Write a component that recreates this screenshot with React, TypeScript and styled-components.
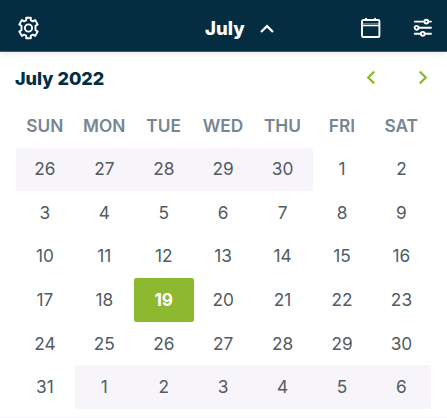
import React from 'react';
import styled, { createGlobalStyle } from 'styled-components';

const GlobalStyle = createGlobalStyle`
  *, *::before, *::after { box-sizing: border-box; }
  body { margin: 0; background: #fff; overflow: hidden; }
  button { padding: 0; border: 0; background: none; font: inherit; color: inherit; display: flex; }
  svg { display: block; fill: none; stroke: currentColor; }
`;

const Page = styled.main`
  width: 447px;
  height: 418px;
  display: flex;
  flex-direction: column;
  border-bottom: 1px solid #f7f6f8;
  font-family: Inter, "Liberation Sans", sans-serif;
`;

const TopBar = styled.header`
  height: 52px;
  flex: none;
  display: grid;
  grid-template-columns: 189px auto 1fr;
  align-items: center;
  padding: 4px 14px 0 16px;
  background: #042d42;
  color: #fff;
  border-bottom: 1px solid #405b6c;
  box-shadow: 0 1px 6px rgba(70, 40, 90, 0.14);
`;

const MonthPicker = styled.button`
  && { align-items: center; gap: 15px; }
  font-size: 18.5px;
  line-height: 24px;

  && { font-weight: 800; }

  svg { margin-top: 2px; }
`;

const Actions = styled.div`
  display: flex;
  justify-content: flex-end;
  gap: 31px;
`;

const MonthHeader = styled.div`
  height: 52px;
  flex: none;
  display: flex;
  justify-content: space-between;
  align-items: center;
  padding: 0 18px 0 15px;
`;

const MonthTitle = styled.h1`
  margin: 1px 0 0;
  font-size: 18px;
  line-height: 24px;
  font-weight: 800;
  color: #042d42;
`;

const MonthNav = styled.nav`
  display: flex;
  gap: 40px;
  color: #8cb92f;
`;

const Weekdays = styled.div`
  height: 43.5px;
  flex: none;
  margin: 0 16px 0 15px;
  display: grid;
  grid-template-columns: repeat(7, 1fr);
  align-items: center;
  text-align: center;
  font-size: 17.3px;
  font-weight: 570;
  color: #768692;
`;

const Days = styled.div`
  flex: none;
  margin: 0 15.5px;
  display: grid;
  grid-template-columns: repeat(7, 1fr);
  grid-auto-rows: 43.6px;
`;

type DayKind = 'current' | 'outside' | 'today';

const Day = styled.div<{ $kind: DayKind; $radius: string }>`
  display: flex;
  align-items: center;
  justify-content: center;
  padding: 0 0.6px 1px 0;
  font-size: 17.3px;
  font-weight: ${(p) => (p.$kind === 'today' ? 750 : 400)};
  color: ${(p) => (p.$kind === 'today' ? '#fff' : '#535b63')};
  background: ${(p) => ({ current: 'transparent', outside: '#f7f5f9', today: '#8cb92f' })[p.$kind]};
  border-radius: ${(p) => p.$radius};
`;

const names = ['SUN', 'MON', 'TUE', 'WED', 'THU', 'FRI', 'SAT'];

const days = Array.from({ length: 42 }, (_, i) => {
  const n = i - 4;
  const kind: DayKind = n < 1 || n > 31 ? 'outside' : n === 19 ? 'today' : 'current';
  const radius = kind === 'today' ? '2px' : i === 0 ? '2px 0 0 2px' : i === 4 ? '0 2px 2px 0' : '0';
  return { label: n < 1 ? n + 30 : n > 31 ? n - 31 : n, kind, radius };
});

const GearIcon = () => (
  <svg width="24" height="24" viewBox="0 0 24 24" strokeWidth="1.9" strokeLinejoin="round">
    <path d="M10.2 1.8h4.6v2.5l1.9 1.1 2.4-1.3 2.6 4.4-2.2 1.4v4.2l2.2 1.4-2.6 4.4-2.4-1.3-1.9 1.1v2.5h-4.6v-2.5l-1.9-1.1-2.4 1.3-2.6-4.4 2.2-1.4V9.9L3.3 8.5l2.6-4.4 2.4 1.3 1.9-1.1z" />
    <circle cx="12.5" cy="12" r="3.6" />
  </svg>
);

const CalendarIcon = () => (
  <svg width="22" height="22" viewBox="0 0 22 22" strokeWidth="1.9" strokeLinecap="round">
    <rect x="2" y="3" width="17.4" height="17" rx="1.3" />
    <path d="M2 6.7h17.4" strokeWidth="1" opacity="0.45" />
    <path d="M2 8.4h17.4" strokeWidth="1.5" />
    <path d="M6.1 1.8v1M15 1.8v1" strokeWidth="2" />
  </svg>
);

const SlidersIcon = () => (
  <svg width="20" height="22" viewBox="0 0 20 22" strokeWidth="1.9" strokeLinecap="round">
    <path d="M1.8 4.6h9.4M15.5 4.6h2.5M6 10.8h12M1.8 16.8h6M12 16.8h6" />
    <circle cx="13.3" cy="4.6" r="1.9" />
    <circle cx="3.6" cy="10.8" r="1.9" />
    <circle cx="9.8" cy="16.8" r="1.9" />
  </svg>
);

const CaretUp = () => (
  <svg width="14" height="10" viewBox="0 0 14 10" strokeWidth="2.2">
    <path d="M1 8l6-5.9 6 5.9" />
  </svg>
);

const Chevron = ({ d }: { d: string }) => (
  <svg width="12" height="16" viewBox="0 0 12 16" strokeWidth="2.2">
    <path d={d} />
  </svg>
);

export default function App() {
  return (
    <Page>
      <GlobalStyle />
      <TopBar>
        <button aria-label="Settings"><GearIcon /></button>
        <MonthPicker>July <CaretUp /></MonthPicker>
        <Actions>
          <button aria-label="Calendar"><CalendarIcon /></button>
          <button aria-label="Filters"><SlidersIcon /></button>
        </Actions>
      </TopBar>
      <MonthHeader>
        <MonthTitle>July 2022</MonthTitle>
        <MonthNav>
          <button aria-label="Previous month"><Chevron d="M9.2 1.6L3.2 7.5l6 5.9" /></button>
          <button aria-label="Next month"><Chevron d="M2.8 1.6l6 5.9-6 5.9" /></button>
        </MonthNav>
      </MonthHeader>
      <Weekdays>{names.map((n) => <span key={n}>{n}</span>)}</Weekdays>
      <Days>
        {days.map((d, i) => <Day key={i} $kind={d.kind} $radius={d.radius}>{d.label}</Day>)}
      </Days>
    </Page>
  );
}
